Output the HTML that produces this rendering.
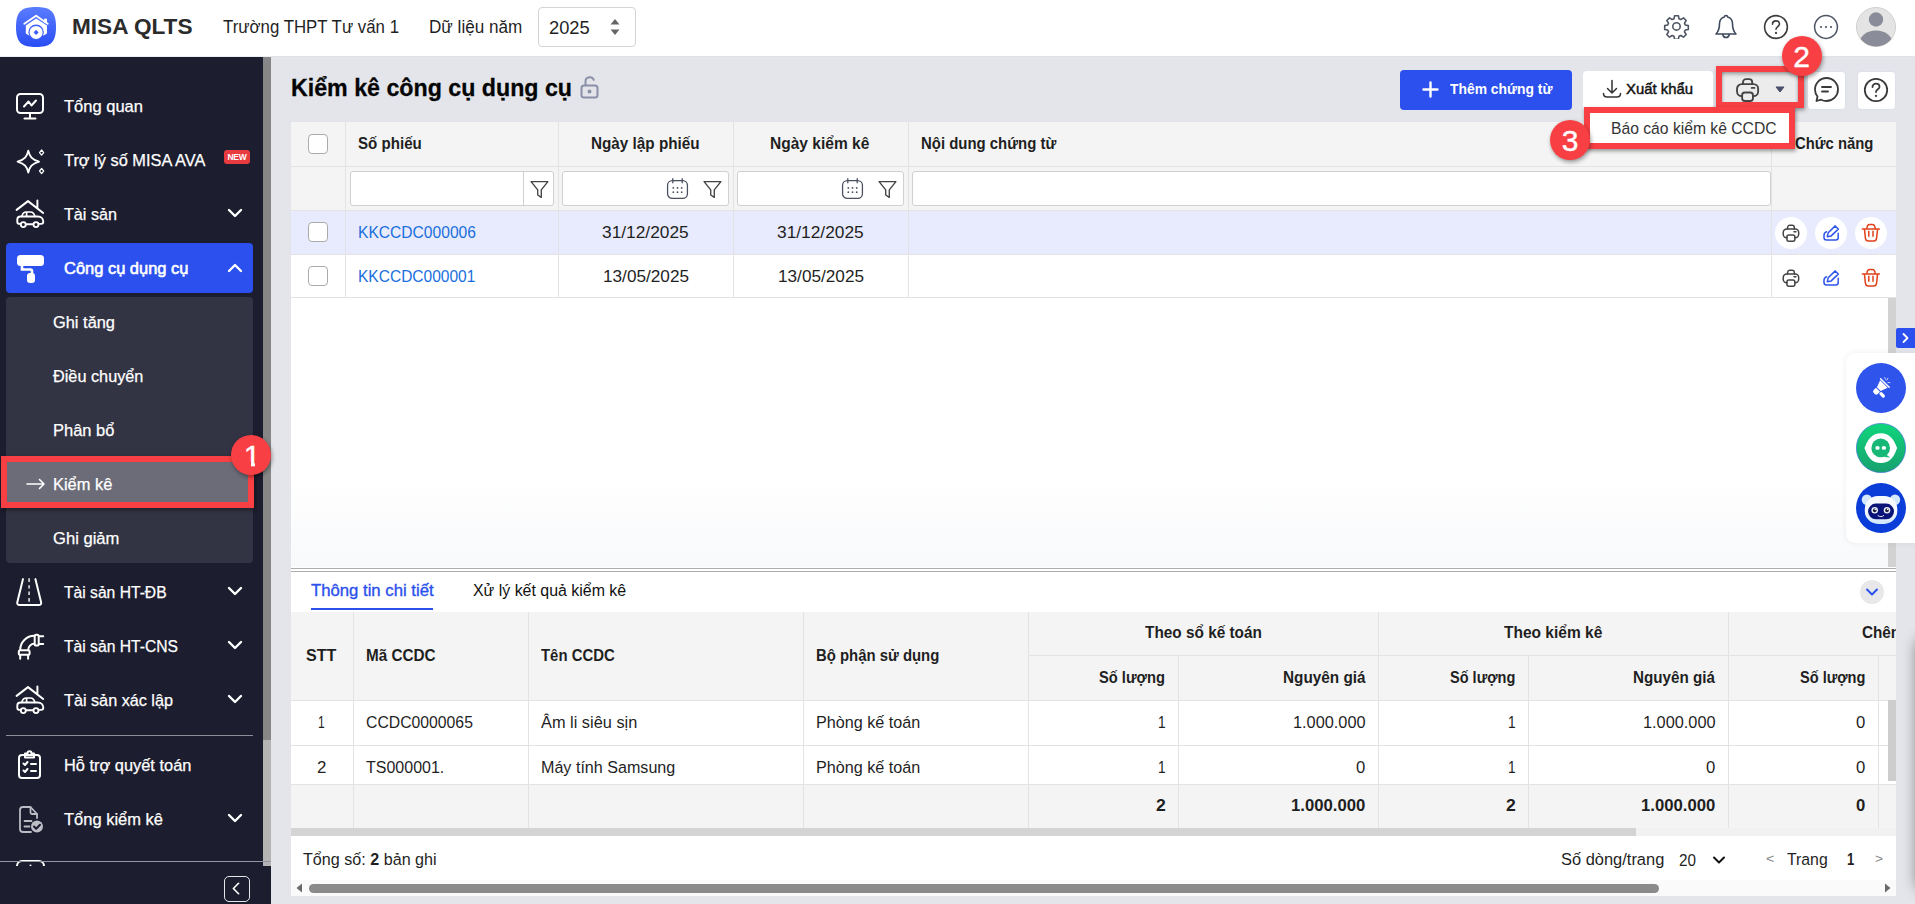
<!DOCTYPE html>
<html lang="vi">
<head>
<meta charset="utf-8">
<title>MISA QLTS - Kiểm kê công cụ dụng cụ</title>
<style>
*{box-sizing:border-box;margin:0;padding:0}
html,body{width:1915px;height:904px;overflow:hidden;background:#e4e5ea;font-family:"Liberation Sans",sans-serif;color:#1f1f1f}
.abs{position:absolute}
svg{display:block}
#hdr{position:absolute;left:0;top:0;width:1915px;height:56px;background:#fff;border-bottom:0}
#hdr .t{position:absolute;white-space:nowrap;line-height:20px}
#side{position:absolute;left:0;top:57px;width:271px;height:847px;background:#1c1d2e;overflow:hidden}
.mi{position:absolute;left:6px;width:247px;height:50px;border-radius:4px;color:#fff;font-size:16.800px}
.mi .lb{position:absolute;left:57.500px;top:17.200px;-webkit-text-stroke:.25px #fff;line-height:20px;white-space:nowrap}
.mi .ic{position:absolute;left:9px;top:11px;width:30px;height:30px}
.mi .ch{position:absolute;left:220px;top:18px}
.sm{position:absolute;left:0;width:247px;height:46px;color:#fff;font-size:16.800px}
.sm .lb{position:absolute;left:47.500px;top:14.200px;-webkit-text-stroke:.25px #fff;line-height:20px;white-space:nowrap}
#main{position:absolute;left:271px;top:57px;border-top:0;width:1644px;height:847px;background:#e4e5ea}
.btn{position:absolute;top:70px;height:39px;border-radius:4px;background:#fff}
.th{position:absolute;font-weight:bold;font-size:16.800px;line-height:20px;white-space:nowrap;color:#1f1f1f}
.td.b{font-weight:bold}
.td{position:absolute;font-size:16.800px;line-height:20px;white-space:nowrap;color:#1f1f1f}
.vl{position:absolute;width:1px;background:#e3e3e3}
.hl{position:absolute;height:1px;background:#e3e3e3}
.cb{position:absolute;width:20px;height:20px;border:1px solid #ababab;border-radius:4px;background:#fff}
.fi{position:absolute;top:171px;height:35px;border:1px solid #d0d0d0;border-radius:3px;background:#fff}
.red{position:absolute;border:6px solid #f84044;box-shadow:1px 2px 4px rgba(0,0,0,.4)}
.num i{position:absolute;background:#f84044;height:4.600px;top:27.200px}
.num{position:absolute;width:40px;height:40px;border-radius:50%;background:#f84044;color:#fff;font-size:30px;line-height:41px;text-align:center;-webkit-text-stroke:.4px #fff;box-shadow:1px 2px 4px rgba(0,0,0,.4)}
</style>
</head>
<body>
<!-- HEADER -->
<div id="hdr">
  <div class="abs" id="logo" style="left:16px;top:7px;width:40px;height:40px">
    <svg width="40" height="40" viewBox="0 0 40 40"><defs><linearGradient id="lg" x1="0" y1="0" x2="0" y2="1"><stop offset="0" stop-color="#5a7cff"/><stop offset="1" stop-color="#2a4df5"/></linearGradient></defs>
    <path d="M20 0C33 0 40 3 40 20C40 37 33 40 20 40C7 40 0 37 0 20C0 3 7 0 20 0Z" fill="url(#lg)"/>
    <path d="M8.300 16.800L20.100 8.700L31.700 16.800" fill="none" stroke="#fff" stroke-width="2" stroke-linecap="round" stroke-linejoin="round"/>
    <rect x="28.100" y="11.700" width="2.900" height="4.300" fill="#fff"/>
    <path d="M9.800 18.600L20.100 11.500L31 18.600V26.500L27.500 28.500H13L9.800 26.500z" fill="#fff"/>
    <circle cx="20.100" cy="25.300" r="7.700" fill="#3c5ffa"/>
    <circle cx="20.100" cy="25.400" r="6.500" fill="#fff"/>
    <path d="M20.100 22.800l2.500 2.600-2.500 2.600-2.500-2.600z" fill="#3c5ffa"/></svg>
  </div>
  <div class="t" style="left:71.500px;top:15.400px;font-size:22.300px;font-weight:bold;color:#2b2b2b;line-height:24px;left:71.5px;transform-origin:0 50%;transform:scaleX(1.0133)">MISA QLTS</div>
  <div class="t" style="left:222.500px;top:17.200px;font-size:17.500px;left:222.5px;transform-origin:0 50%;transform:scaleX(0.9613)">Trường THPT Tư vấn 1</div>
  <div class="t" style="left:430px;top:17.200px;font-size:17.500px;left:429.3px;transform-origin:0 50%;transform:scaleX(0.9782)">Dữ liệu năm</div>
  <div class="abs" style="left:538px;top:7px;width:98px;height:40px;border:1px solid #d4d4d4;border-radius:4px"></div>
  <div class="t" style="left:549px;top:18px;font-size:17.800px;left:548.5px;transform-origin:0 50%;transform:scaleX(1.0288)">2025</div>
  <svg class="abs" style="left:608px;top:16px" width="14" height="22" viewBox="0 0 14 22"><path d="M2.5 8.5L7 3l4.5 5.5z" fill="#666"/><path d="M2.5 13.5L7 19l4.5-5.5z" fill="#666"/></svg>

  <svg class="abs" style="left:1662.500px;top:12px" width="27" height="27" viewBox="0 0 24 24" fill="none" stroke="#4d5563" stroke-width="1.400" stroke-linejoin="round"><path d="M10.300 2.500h3.400l.5 2.700 1.700.7 2.300-1.500 2.400 2.400-1.500 2.300.7 1.700 2.700.5v3.400l-2.700.5-.7 1.700 1.500 2.300-2.400 2.400-2.300-1.500-1.700.7-.5 2.700h-3.400l-.5-2.700-1.700-.7-2.300 1.500-2.400-2.400 1.500-2.300-.7-1.700-2.700-.5v-3.400l2.700-.5.700-1.700-1.500-2.300 2.400-2.400 2.300 1.500 1.700-.7z" transform="translate(0 0.800)"/><circle cx="12" cy="12.800" r="3.300"/></svg>
  <svg class="abs" style="left:1713px;top:13px" width="26" height="28" viewBox="0 0 26 28" fill="none" stroke="#3f4a5c" stroke-width="1.600" stroke-linecap="round" stroke-linejoin="round"><path d="M13 2.500c-.9 0-1.600.7-1.600 1.500-3 .8-4.900 3.500-4.900 6.800 0 5.500-1.500 8.200-3.500 10.200h20c-2-2-3.500-4.700-3.500-10.200 0-3.300-1.900-6-4.900-6.800 0-.8-.7-1.500-1.600-1.500z"/><path d="M9.800 21.500c.3 1.800 1.600 3 3.200 3s2.900-1.200 3.200-3"/></svg>
  <svg class="abs" style="left:1763px;top:14px" width="26" height="26" viewBox="0 0 26 26" fill="none" stroke="#3c3c3c" stroke-width="1.600" stroke-linecap="round" stroke-linejoin="round"><circle cx="13" cy="13" r="11.400"/><path d="M9.500 10.200c0-2 1.500-3.300 3.500-3.300s3.500 1.300 3.500 3.200c0 2.300-3.500 2.600-3.500 5.100"/><path d="M13 18.900v.2" stroke-width="2.200"/></svg>
  <svg class="abs" style="left:1813px;top:14px" width="26" height="26" viewBox="0 0 26 26" fill="none" stroke="#4d5563" stroke-width="1.500" stroke-linecap="round"><circle cx="13" cy="13" r="11.400"/><path d="M8 13h.01M13 13h.01M18 13h.01" stroke-width="2.200"/></svg>
  <svg class="abs" style="left:1856px;top:7px" width="40" height="40" viewBox="0 0 40 40"><defs><clipPath id="avc"><circle cx="20" cy="20" r="19.500"/></clipPath></defs><circle cx="20" cy="20" r="19.500" fill="#e4e4e4" stroke="#d0d0d0" stroke-width="1"/><g clip-path="url(#avc)" fill="#8a8c99"><circle cx="20" cy="12.500" r="7.200"/><ellipse cx="20" cy="36" rx="16.500" ry="12.500"/></g></svg>
</div>

<div class="abs" style="left:0;top:56px;width:271px;height:1px;background:#eeeef2"></div><div class="abs" style="left:271px;top:56px;width:1644px;height:1px;background:#e0e1e6"></div>
<!-- SIDEBAR -->
<div id="side">
  <!-- scrollbar -->
  <div class="abs" style="left:263px;top:0;width:8px;height:809px;background:#b4b4b4"></div>
  <div class="abs" style="left:263px;top:0;width:8px;height:683px;background:#878787"></div>

  <div class="mi" style="top:23px"><svg class="ic" viewBox="0 0 30 30" fill="none" stroke="#fff" stroke-width="2" stroke-linecap="round" stroke-linejoin="round"><rect x="2" y="3" width="26" height="19" rx="3.5"/><path d="M15 22v5M9.5 27.5h11"/><path d="M9 15.5l4.5-5 3 4 4.5-5"/></svg><span class="lb" style="left:57.5px;transform-origin:0 50%;transform:scaleX(0.9844)">Tổng quan</span></div>

  <div class="mi" style="top:77px"><svg class="ic" viewBox="0 0 30 30" fill="none" stroke="#fff" stroke-width="1.9" stroke-linejoin="round"><path d="M13.300 5.600c1.300 6.200 3.600 8.800 10.700 11c-7.100 2.200-9.400 4.800-10.700 11c-1.300-6.200-3.600-8.800-10.700-11c7.100-2.200 9.400-4.800 10.700-11z"/><path d="M26.600 5l2.100 2.600-2.100 2.600-2.100-2.600zM26.600 23.400l2.100 2.600-2.100 2.600-2.100-2.600z" stroke-width="1.200"/></svg><span class="lb" style="left:57.5px;transform-origin:0 50%;transform:scaleX(0.9753)">Trợ lý số MISA AVA</span><span class="abs" style="left:218px;top:16px;width:26px;height:14px;border-radius:3px;background:#e83b3f;color:#fff;font-size:8.5px;font-weight:bold;line-height:14px;text-align:center;letter-spacing:-.2px">NEW</span></div>

  <div class="mi" style="top:131px"><svg class="ic" viewBox="0 0 30 30" fill="none" stroke="#fff" stroke-width="2" stroke-linecap="round" stroke-linejoin="round"><path d="M1.600 10.900L13 2.100L28.200 14M22.400 1.600v7.300"/><path d="M5.300 24.900H4.500c-1.300 0-2.200-.9-2.200-2.200v-2.100c0-1.800 1.400-3.100 3.200-3.100h17.300c3.100 0 5.500 2.300 5.500 5.300 0 1.200-.9 2.100-2 2.100h-2M11.400 25.300h6.500" stroke-width="1.900"/><path d="M6.900 17.300c.5-2.700 2-4.300 4.500-4.300h4c2.500 0 3.800 1.600 4.400 4.300M11.600 13.200v4" stroke-width="1.700"/><circle cx="8.300" cy="25.600" r="2.500" stroke-width="1.900"/><circle cx="21" cy="25.600" r="2.500" stroke-width="1.900"/></svg><span class="lb" style="left:57.5px;transform-origin:0 50%;transform:scaleX(0.9631)">Tài sản</span><svg class="ch" width="18" height="14" viewBox="0 0 18 14" fill="none" stroke="#fff" stroke-width="2.4" stroke-linecap="round" stroke-linejoin="round"><path d="M3 4l6 6 6-6"/></svg></div>

  <div class="mi" style="top:186px;background:#2b50ed;-webkit-text-stroke:.55px #fff"><svg class="ic" viewBox="0 0 30 30" fill="#fff"><rect x="2" y="1" width="27" height="11" rx="3.500"/><path d="M7 12v3.500h8.500c.8 0 1.500.7 1.500 1.500v4" fill="none" stroke="#fff" stroke-width="2.6"/><rect x="12" y="19" width="8" height="10" rx="3"/></svg><span class="lb" style="-webkit-text-stroke:.6px #fff;top:16.200px;left:57.5px;transform-origin:0 50%;transform:scaleX(0.9804)">Công cụ dụng cụ</span><svg class="ch" width="18" height="14" viewBox="0 0 18 14" fill="none" stroke="#fff" stroke-width="2.4" stroke-linecap="round" stroke-linejoin="round"><path d="M3 10l6-6 6 6"/></svg></div>

  <div class="abs" style="left:6px;top:240px;width:247px;height:266px;border-radius:4px;background:#323343">
    <div class="sm" style="top:2px"><span class="lb" style="left:47.1px;transform-origin:0 50%;transform:scaleX(0.9771)">Ghi tăng</span></div>
    <div class="sm" style="top:56px"><span class="lb" style="left:47.1px;transform-origin:0 50%;transform:scaleX(0.9689)">Điều chuyển</span></div>
    <div class="sm" style="top:110px"><span class="lb" style="left:47.1px;transform-origin:0 50%;transform:scaleX(0.9819)">Phân bổ</span></div>
    <div class="sm" style="top:164px;background:#6b6c78"><svg class="abs" style="left:20px;top:16px" width="20" height="14" viewBox="0 0 20 14" fill="none" stroke="#fff" stroke-width="1.6" stroke-linecap="round" stroke-linejoin="round"><path d="M1 7h17M13.500 2.500L18 7l-4.500 4.500"/></svg><span class="lb" style="left:47.1px;transform-origin:0 50%;transform:scaleX(0.9798)">Kiểm kê</span></div>
    <div class="sm" style="top:218px"><span class="lb" style="left:47.1px;transform-origin:0 50%;transform:scaleX(0.9887)">Ghi giảm</span></div>
  </div>

  <div class="mi" style="top:509px"><svg class="ic" viewBox="0 0 30 30" fill="none" stroke="#fff" stroke-width="2" stroke-linecap="round" stroke-linejoin="round"><path d="M8 2.100L2.300 25.200c-.4 1.600.5 2.900 2.200 2.900h19.400c1.700 0 2.600-1.300 2.200-2.900L20.400 2.100"/><path d="M14.100 1.300v3.600M14.100 8.200v3.300M14.100 14.600v3.300M14.100 20.900v3.900" stroke-width="1.600" stroke-linecap="butt" opacity=".85"/></svg><span class="lb" style="left:57.5px;transform-origin:0 50%;transform:scaleX(0.9323)">Tài sản HT-ĐB</span><svg class="ch" width="18" height="14" viewBox="0 0 18 14" fill="none" stroke="#fff" stroke-width="2.4" stroke-linecap="round" stroke-linejoin="round"><path d="M3 4l6 6 6-6"/></svg></div>

  <div class="mi" style="top:563px"><svg class="ic" viewBox="0 0 30 30" fill="none" stroke="#fff" stroke-width="2" stroke-linecap="round" stroke-linejoin="round"><path d="M5.200 18.900A14.100 14.100 0 0 1 19.300 4.800M13.200 18.900A6.100 6.100 0 0 1 19.300 12.800"/><rect x="19.700" y="3.700" width="4" height="10.800" rx="1.600"/><path d="M23.800 5.300h4.400M23.800 13h4.400"/><rect x="3.800" y="19.300" width="10.800" height="4.500" rx="1.600"/><path d="M5.200 24v3.700M13.100 24v3.700"/></svg><span class="lb" style="left:57.5px;transform-origin:0 50%;transform:scaleX(0.9332)">Tài sản HT-CNS</span><svg class="ch" width="18" height="14" viewBox="0 0 18 14" fill="none" stroke="#fff" stroke-width="2.4" stroke-linecap="round" stroke-linejoin="round"><path d="M3 4l6 6 6-6"/></svg></div>

  <div class="mi" style="top:617px"><svg class="ic" viewBox="0 0 30 30" fill="none" stroke="#fff" stroke-width="2" stroke-linecap="round" stroke-linejoin="round"><path d="M1.600 10.900L13 2.100L28.200 14M22.400 1.600v7.300"/><path d="M5.300 24.900H4.500c-1.300 0-2.200-.9-2.200-2.200v-2.100c0-1.800 1.400-3.100 3.200-3.100h17.300c3.100 0 5.500 2.300 5.500 5.300 0 1.200-.9 2.100-2 2.100h-2M11.400 25.300h6.500" stroke-width="1.900"/><path d="M6.900 17.300c.5-2.700 2-4.300 4.500-4.300h4c2.500 0 3.800 1.600 4.400 4.300M11.600 13.200v4" stroke-width="1.700"/><circle cx="8.300" cy="25.600" r="2.500" stroke-width="1.900"/><circle cx="21" cy="25.600" r="2.500" stroke-width="1.900"/></svg><span class="lb" style="left:57.5px;transform-origin:0 50%;transform:scaleX(0.9657)">Tài sản xác lập</span><svg class="ch" width="18" height="14" viewBox="0 0 18 14" fill="none" stroke="#fff" stroke-width="2.4" stroke-linecap="round" stroke-linejoin="round"><path d="M3 4l6 6 6-6"/></svg></div>

  <div class="abs" style="left:6px;top:678px;width:247px;height:1px;background:#8d8e97"></div>

  <div class="mi" style="top:682px"><svg class="ic" viewBox="0 0 30 30" fill="none" stroke="#fff" stroke-width="2" stroke-linecap="round" stroke-linejoin="round"><rect x="4" y="5" width="21" height="23" rx="3"/><path d="M10 5V3.500h2.500c0-1.500 1-2.200 2-2.200s2 .7 2 2.200H19V5v2.500h-9z"/><path d="M8.500 13.500l1.500 1.500 2.500-3M8.500 20.500l1.500 1.500 2.500-3M16 14h5M16 21h5"/></svg><span class="lb" style="left:57.5px;transform-origin:0 50%;transform:scaleX(0.9768)">Hỗ trợ quyết toán</span></div>

  <div class="mi" style="top:736px"><svg class="ic" viewBox="0 0 30 30" fill="none" stroke="#babbc4" stroke-width="1.800" stroke-linecap="round" stroke-linejoin="round"><path d="M22 14V10l-6.500-7H8c-1.700 0-3 1.300-3 3v19c0 1.700 1.300 3 3 3h8"/><path d="M15.500 3v5.500c0 .8.700 1.500 1.500 1.500H22"/><path d="M9.500 17h7M9.500 22.500h5"/><circle cx="22" cy="22.500" r="6" fill="#bdbdc6" stroke="none"/><path d="M19 22.500l2.200 2.200 3.800-4" stroke="#1c1d2e" stroke-width="2"/></svg><span class="lb" style="left:57.5px;transform-origin:0 50%;transform:scaleX(0.9828)">Tổng kiểm kê</span><svg class="ch" width="18" height="14" viewBox="0 0 18 14" fill="none" stroke="#fff" stroke-width="2.4" stroke-linecap="round" stroke-linejoin="round"><path d="M3 4l6 6 6-6"/></svg></div>

  <div class="mi" style="top:790px"><svg class="ic" viewBox="0 0 30 30" fill="none" stroke="#fff" stroke-width="2" stroke-linecap="round" stroke-linejoin="round"><rect x="2" y="3" width="27" height="19" rx="5"/><path d="M15.500 7.500v.01"/></svg></div>

  <!-- bottom bar -->
  <div class="abs" style="left:0;top:809px;width:271px;height:40px;background:#1c1d2e"></div><div class="abs" style="left:0;top:804px;width:271px;height:1px;background:#9495a0"></div>
  <div class="abs" style="left:224px;top:819px;width:26px;height:26px;border:1.500px solid #e6e6ea;border-radius:5px"><svg width="23" height="23" viewBox="0 0 22 22" fill="none" stroke="#fff" stroke-width="1.600" stroke-linecap="round" stroke-linejoin="round"><path d="M13 6l-5 5 5 5"/></svg></div>
</div>

<!-- MAIN -->
<div id="main"></div>
<div id="mc">
  <div class="abs" style="left:291px;top:73.500px;font-size:24.300px;font-weight:bold;line-height:28px;white-space:nowrap;color:#050505;-webkit-text-stroke:.3px #050505;left:291.1px;transform-origin:0 50%;transform:scaleX(0.9548)">Kiểm kê công cụ dụng cụ</div>
  <svg class="abs" style="left:580px;top:75px" width="19" height="24" viewBox="0 0 19 24" fill="none" stroke="#8a90a8" stroke-width="2" stroke-linecap="round"><rect x="1.500" y="10.500" width="16" height="12" rx="2.500"/><path d="M5.500 10V6.500a4.300 4.300 0 0 1 8.300-1.600"/><circle cx="9.500" cy="16.500" r="1.300" fill="#8a90a8" stroke-width="1.400"/></svg>

  <div class="btn" style="left:1400px;width:172px;height:40px;background:#2b50ed;color:#fff;font-weight:bold;font-size:15.500px"><svg class="abs" style="left:21.500px;top:11px" width="17" height="17" viewBox="0 0 17 17" stroke="#fff" stroke-width="2.400" stroke-linecap="round"><path d="M8.500 1.500v14M1.500 8.500h14"/></svg><span class="abs" style="left:50px;top:8.500px;line-height:20px;white-space:nowrap;left:49.5px;transform-origin:0 50%;transform:scaleX(0.8945)">Thêm chứng từ</span></div>
  <div class="btn" style="left:1583px;top:71px;height:38px;width:130px;color:#111;font-weight:bold;font-size:15.500px"><svg class="abs" style="left:19px;top:8px" width="20" height="20" viewBox="0 0 20 20" fill="none" stroke="#333" stroke-width="1.500" stroke-linecap="round" stroke-linejoin="round"><path d="M10 1.500v12M5.500 9.500l4.500 4.500 4.500-4.500M1.500 14.500c0 2 1.500 3.500 3.500 3.500h10c2 0 3.500-1.500 3.500-3.500"/></svg><span class="abs" style="left:43px;top:7.500px;line-height:20px;white-space:nowrap;font-weight:normal;-webkit-text-stroke:.45px #111;left:42.5px;transform-origin:0 50%;transform:scaleX(0.9597)">Xuất khẩu</span></div>
  <div class="btn" style="left:1722px;top:71px;width:76px;height:31px;background:#ececec;border-radius:0;box-shadow:inset 0 5px 5px -3px rgba(0,0,0,.5),inset 3px 0 3px -2px rgba(90,100,130,.3),inset -3px 0 3px -2px rgba(90,100,130,.3)"><div class="abs" style="left:12px;top:5px"><svg width="28" height="28" viewBox="0 0 24 24" fill="none" stroke="#444" stroke-width="1.6" stroke-linecap="round" stroke-linejoin="round"><path d="M7.700 6.900V5.300a2.600 2.600 0 0 1 2.600-2.600h2.700a2.600 2.600 0 0 1 2.600 2.600v1.600"/><path d="M7 17.300H6.600a4 4 0 0 1-4-4v-2.300a4 4 0 0 1 4-4h10.100a4 4 0 0 1 4 4v2.300a4 4 0 0 1-4 4h-.5"/><rect x="6.950" y="14.100" width="9.300" height="7.300" rx="2.300"/><path d="M15.200 10.200h2.300"/></svg></div><svg class="abs" style="left:52.500px;top:15px" width="10" height="7" viewBox="0 0 10 7"><path d="M1 1h8L5 6z" fill="#4a4f6a" stroke="#4a4f6a" stroke-width="1" stroke-linejoin="round"/></svg></div>
  <div class="btn" style="left:1806.500px;top:70.500px;width:39px;height:39px;border:1px solid #dde0e8"><svg class="abs" style="left:5px;top:4px" width="27" height="27" viewBox="0 0 27 27" fill="none" stroke="#3a3a3a" stroke-width="1.800" stroke-linecap="round" stroke-linejoin="round"><path d="M4.500 20.500C2.800 18.600 2 16.200 2 13.500 2 7.100 7.100 2 13.500 2S25 7.100 25 13.500 19.900 25 13.500 25c-2 0-3.800-.5-5.400-1.300L3.500 25z"/><path d="M9 11h9M9 15.500h6"/></svg></div>
  <div class="btn" style="left:1856.500px;top:70.500px;width:39px;height:39px;border:1px solid #dde0e8"><svg class="abs" style="left:5px;top:5px" width="26" height="26" viewBox="0 0 26 26" fill="none" stroke="#3a3a3a" stroke-width="1.800" stroke-linecap="round" stroke-linejoin="round"><circle cx="13" cy="13" r="11.200"/><path d="M9.500 10c0-2 1.500-3.300 3.500-3.300s3.500 1.300 3.500 3.200c0 2.300-3.500 2.600-3.500 5.100"/><path d="M13 18.800v.2" stroke-width="2.200"/></svg></div>

  <!-- master grid -->
  <div class="abs" style="left:291px;top:122px;width:1605px;height:446px;background:#fff"></div>
  <div class="abs" style="left:291px;top:122px;width:1605px;height:89px;background:#f4f4f4"></div>
  <div class="abs" style="left:291px;top:211px;width:1605px;height:44px;background:#e8ebfd"></div>
  <div class="hl" style="left:291px;top:166px;width:1605px"></div>
  <div class="hl" style="left:291px;top:210px;width:1605px"></div>
  <div class="hl" style="left:291px;top:254px;width:1605px"></div>
  <div class="hl" style="left:291px;top:297px;width:1605px"></div>
  <div class="vl" style="left:345px;top:122px;height:176px"></div>
  <div class="vl" style="left:558px;top:122px;height:176px"></div>
  <div class="vl" style="left:733px;top:122px;height:176px"></div>
  <div class="vl" style="left:908px;top:122px;height:176px"></div>
  <div class="vl" style="left:1771px;top:122px;height:176px"></div>
  <div class="abs" style="left:1888px;top:298px;width:8px;height:270px;background:#d2d2d2"></div>

  <div class="cb" style="left:308px;top:134px"></div>
  <div class="cb" style="left:308px;top:222px"></div>
  <div class="cb" style="left:308px;top:266px"></div>
  <div class="th" style="left:358px;top:133.500px;left:358.1px;transform-origin:0 50%;transform:scaleX(0.9004)">Số phiếu</div>
  <div class="th" style="left:558px;top:133.500px;left:591.1px;transform-origin:0 50%;transform:scaleX(0.9107)">Ngày lập phiếu</div>
  <div class="th" style="left:733px;top:133.500px;left:770.4px;transform-origin:0 50%;transform:scaleX(0.9256)">Ngày kiểm kê</div>
  <div class="th" style="left:921px;top:133.500px;left:921px;transform-origin:0 50%;transform:scaleX(0.8895)">Nội dung chứng từ</div>
  <div class="th" style="left:1795px;top:133.500px;left:1794.8px;transform-origin:0 50%;transform:scaleX(0.8848)">Chức năng</div>

  <div class="fi" style="left:350px;width:204px"><div class="abs" style="left:172px;top:0;width:1px;height:33px;background:#d0d0d0"></div><div class="abs" style="left:178px;top:7px"><svg width="21" height="21" viewBox="0 0 20 20" fill="none" stroke="#444" stroke-width="1.300" stroke-linejoin="round"><path d="M2 2.500h16l-6.300 7.800v7.200l-3.400-2.300v-4.900z"/></svg></div></div>
  <div class="fi" style="left:562px;width:167px"><div class="abs" style="left:103px;top:5px"><svg width="23" height="23" viewBox="0 0 22 22" fill="none" stroke="#4a4f5e" stroke-width="1.200" stroke-linecap="round"><rect x="1.500" y="3.500" width="19" height="17" rx="4.500"/><path d="M6.500 1.500v4M15.500 1.500v4"/><g stroke-width="1.700"><path d="M7 10.500h.01M11 10.500h.01M15 10.500h.01M7 14.500h.01M11 14.500h.01M15 14.500h.01"/></g></svg></div><div class="abs" style="left:139px;top:7px"><svg width="21" height="21" viewBox="0 0 20 20" fill="none" stroke="#444" stroke-width="1.300" stroke-linejoin="round"><path d="M2 2.500h16l-6.300 7.800v7.200l-3.400-2.300v-4.900z"/></svg></div></div>
  <div class="fi" style="left:737px;width:167px"><div class="abs" style="left:103px;top:5px"><svg width="23" height="23" viewBox="0 0 22 22" fill="none" stroke="#4a4f5e" stroke-width="1.200" stroke-linecap="round"><rect x="1.500" y="3.500" width="19" height="17" rx="4.500"/><path d="M6.500 1.500v4M15.500 1.500v4"/><g stroke-width="1.700"><path d="M7 10.500h.01M11 10.500h.01M15 10.500h.01M7 14.500h.01M11 14.500h.01M15 14.500h.01"/></g></svg></div><div class="abs" style="left:139px;top:7px"><svg width="21" height="21" viewBox="0 0 20 20" fill="none" stroke="#444" stroke-width="1.300" stroke-linejoin="round"><path d="M2 2.500h16l-6.300 7.800v7.200l-3.400-2.300v-4.900z"/></svg></div></div>
  <div class="fi" style="left:912px;width:859px"></div>

  <div class="td" style="left:358px;top:222.500px;color:#1a6fdc;left:358.3px;transform-origin:0 50%;transform:scaleX(0.9294)">KKCCDC000006</div>
  <div class="td" style="left:558px;top:222.500px;left:602.1px;transform-origin:0 50%;transform:scaleX(1.0321)">31/12/2025</div>
  <div class="td" style="left:733px;top:222.500px;left:777px;transform-origin:0 50%;transform:scaleX(1.0321)">31/12/2025</div>
  <div class="td" style="left:358px;top:266.500px;color:#1a6fdc;left:358.3px;transform-origin:0 50%;transform:scaleX(0.9254)">KKCCDC000001</div>
  <div class="td" style="left:558px;top:266.500px;left:602.8px;transform-origin:0 50%;transform:scaleX(1.0238)">13/05/2025</div>
  <div class="td" style="left:733px;top:266.500px;left:777.7px;transform-origin:0 50%;transform:scaleX(1.0238)">13/05/2025</div>
  <div class="abs" style="left:1775px;top:217px;width:32px;height:32px;border-radius:50%;background:#fff"></div>
  <div class="abs" style="left:1815px;top:217px;width:32px;height:32px;border-radius:50%;background:#fff"></div>
  <div class="abs" style="left:1855px;top:217px;width:32px;height:32px;border-radius:50%;background:#fff"></div>
  <svg class="abs" style="left:1781.100px;top:222.7px" width="20.500" height="20.500" viewBox="0 0 24 24" fill="none" stroke="#444" stroke-width="1.750" stroke-linecap="round" stroke-linejoin="round"><path d="M7.700 6.900V5.300a2.600 2.600 0 0 1 2.600-2.600h2.700a2.600 2.600 0 0 1 2.600 2.600v1.600"/><path d="M7 17.300H6.600a4 4 0 0 1-4-4v-2.300a4 4 0 0 1 4-4h10.100a4 4 0 0 1 4 4v2.300a4 4 0 0 1-4 4h-.5"/><rect x="6.950" y="14.100" width="9.300" height="7.300" rx="2.300"/><path d="M15.200 10.200h2.300"/></svg><svg class="abs" style="left:1821px;top:223.0px" width="20" height="20" viewBox="0 0 20 20" fill="none" stroke="#2f56ea" stroke-width="1.500" stroke-linecap="round" stroke-linejoin="round"><path d="M14.200 2.900L17.300 6.100L10.200 12.900L6.300 13.700L7.200 9.700z"/><path d="M5.500 8.700C3.700 9.400 3 10.600 3 12.200v2.300a2.500 2.500 0 0 0 2.500 2.500h9.200a2.500 2.500 0 0 0 2.500-2.500V10.200"/></svg><svg class="abs" style="left:1861px;top:222.0px" width="20" height="21" viewBox="0 0 20 21" fill="none" stroke="#e0421c" stroke-width="1.500" stroke-linecap="round" stroke-linejoin="round"><path d="M1.400 7H18.400"/><path d="M5.900 6.600c0-2.800 1.100-4.100 3-4.100h2.200c1.900 0 3 1.300 3 4.100"/><path d="M3.500 7.700l.9 8.400c.2 1.800 1.400 2.900 3 2.900h5.200c1.600 0 2.800-1.100 3-2.900l.9-8.400"/><path d="M7.800 9.300v5M12 9.300v5"/></svg>
  <svg class="abs" style="left:1781.100px;top:267.7px" width="20.500" height="20.500" viewBox="0 0 24 24" fill="none" stroke="#444" stroke-width="1.750" stroke-linecap="round" stroke-linejoin="round"><path d="M7.700 6.900V5.300a2.600 2.600 0 0 1 2.600-2.600h2.700a2.600 2.600 0 0 1 2.600 2.600v1.600"/><path d="M7 17.300H6.600a4 4 0 0 1-4-4v-2.300a4 4 0 0 1 4-4h10.100a4 4 0 0 1 4 4v2.300a4 4 0 0 1-4 4h-.5"/><rect x="6.950" y="14.100" width="9.300" height="7.300" rx="2.300"/><path d="M15.200 10.200h2.300"/></svg><svg class="abs" style="left:1821px;top:268.0px" width="20" height="20" viewBox="0 0 20 20" fill="none" stroke="#2f56ea" stroke-width="1.500" stroke-linecap="round" stroke-linejoin="round"><path d="M14.200 2.900L17.300 6.100L10.200 12.900L6.300 13.700L7.200 9.700z"/><path d="M5.500 8.700C3.700 9.400 3 10.600 3 12.200v2.300a2.500 2.500 0 0 0 2.500 2.500h9.200a2.500 2.500 0 0 0 2.500-2.500V10.200"/></svg><svg class="abs" style="left:1861px;top:267.0px" width="20" height="21" viewBox="0 0 20 21" fill="none" stroke="#e0421c" stroke-width="1.500" stroke-linecap="round" stroke-linejoin="round"><path d="M1.400 7H18.400"/><path d="M5.900 6.600c0-2.800 1.100-4.100 3-4.100h2.200c1.900 0 3 1.300 3 4.100"/><path d="M3.500 7.700l.9 8.400c.2 1.800 1.400 2.900 3 2.900h5.200c1.600 0 2.800-1.100 3-2.900l.9-8.400"/><path d="M7.800 9.300v5M12 9.300v5"/></svg>
  <!-- splitter + detail -->
  <div class="abs" style="left:291px;top:478px;width:1597px;height:89px;background:linear-gradient(#fff,#f8f9fb)"></div>
  <div class="abs" style="left:291px;top:567px;width:1605px;height:5px;background:#fff;border-bottom:1px solid #adadad"></div><div class="abs" style="left:291px;top:568px;width:1605px;height:1px;background:#adadad"></div>
  <div class="abs" style="left:291px;top:572px;width:1605px;height:40px;background:#fff"></div>
  <div class="abs" style="left:311px;top:580.700px;font-size:16.800px;line-height:20px;color:#2b50ed;white-space:nowrap;-webkit-text-stroke:.35px #2b50ed;left:310.8px;transform-origin:0 50%;transform:scaleX(0.9956)">Thông tin chi tiết</div>
  <div class="abs" style="left:311px;top:608px;width:122px;height:2px;background:#2b50ed"></div>
  <div class="abs" style="left:473px;top:580.700px;font-size:16.800px;line-height:20px;color:#111;white-space:nowrap;left:473.2px;transform-origin:0 50%;transform:scaleX(0.9492)">Xử lý kết quả kiểm kê</div>
  <div class="abs" style="left:1860px;top:579.500px;width:24px;height:24px;border-radius:50%;background:#e8e8eb"><svg class="abs" style="left:5px;top:7.500px" width="14" height="10" viewBox="0 0 14 10" fill="none" stroke="#2b50ed" stroke-width="2" stroke-linecap="round" stroke-linejoin="round"><path d="M2 2.500l5 5 5-5"/></svg></div>

  <div class="abs" style="left:291px;top:612px;width:1605px;height:88px;background:#f4f4f4"></div>
  <div class="abs" style="left:291px;top:700px;width:1605px;height:85px;background:#fff"></div>
  <div class="abs" style="left:291px;top:785px;width:1605px;height:43px;background:#f4f4f4"></div>
  <div class="hl" style="left:1028px;top:655px;width:868px"></div>
  <div class="hl" style="left:291px;top:700px;width:1605px"></div>
  <div class="hl" style="left:291px;top:745px;width:1605px"></div>
  <div class="hl" style="left:291px;top:784px;width:1605px"></div>
  <div class="vl" style="left:353px;top:612px;height:216px"></div><div class="vl" style="left:528px;top:612px;height:216px"></div><div class="vl" style="left:803px;top:612px;height:216px"></div><div class="vl" style="left:1028px;top:612px;height:216px"></div><div class="vl" style="left:1378px;top:612px;height:216px"></div><div class="vl" style="left:1728px;top:612px;height:216px"></div><div class="vl" style="left:1178px;top:656px;height:172px"></div><div class="vl" style="left:1528px;top:656px;height:172px"></div><div class="vl" style="left:1878px;top:656px;height:172px"></div>
  <div class="th" style="left:291px;top:645.500px;left:306.1px;transform-origin:0 50%;transform:scaleX(0.9589)">STT</div>
  <div class="th" style="left:366px;top:645.500px;left:365.8px;transform-origin:0 50%;transform:scaleX(0.9104)">Mã CCDC</div>
  <div class="th" style="left:541px;top:645.500px;left:541px;transform-origin:0 50%;transform:scaleX(0.8881)">Tên CCDC</div>
  <div class="th" style="left:816px;top:645.500px;left:815.5px;transform-origin:0 50%;transform:scaleX(0.8874)">Bộ phận sử dụng</div>
  <div class="th" style="left:1028px;top:623.200px;left:1145px;transform-origin:0 50%;transform:scaleX(0.9151)">Theo sổ kế toán</div>
  <div class="th" style="left:1378px;top:623.200px;left:1504px;transform-origin:0 50%;transform:scaleX(0.9245)">Theo kiểm kê</div>
  <div class="abs" style="left:1850px;top:620px;width:46px;height:30px;overflow:hidden"><div class="th" style="left:12px;top:3.200px;left:12.2px;transform-origin:0 50%;transform:scaleX(0.9099)">Chênh lệch</div></div>
  <div class="th" style="left:1015px;top:667.500px;left:1099.3px;transform-origin:0 50%;transform:scaleX(0.8758)">Số lượng</div>
  <div class="th" style="left:1215px;top:667.500px;left:1282.6px;transform-origin:0 50%;transform:scaleX(0.9132)">Nguyên giá</div>
  <div class="th" style="left:1365px;top:667.500px;left:1449.7px;transform-origin:0 50%;transform:scaleX(0.8665)">Số lượng</div>
  <div class="th" style="left:1565px;top:667.500px;left:1633px;transform-origin:0 50%;transform:scaleX(0.9054)">Nguyên giá</div>
  <div class="th" style="left:1715px;top:667.500px;left:1799.5px;transform-origin:0 50%;transform:scaleX(0.8678)">Số lượng</div>
  <div class="td" style="left:318.6px;top:712.8px;left:318.11px;transform-origin:0 50%;transform:scaleX(0.7171)">1</div>
<div class="td" style="left:366px;top:712.8px;left:365.8px;transform-origin:0 50%;transform:scaleX(0.9393)">CCDC0000065</div>
<div class="td" style="left:541px;top:712.8px;left:541px;transform-origin:0 50%;transform:scaleX(0.9741)">Âm li siêu sịn</div>
<div class="td" style="left:816px;top:712.8px;left:815.5px;transform-origin:0 50%;transform:scaleX(0.9636)">Phòng kế toán</div>
<div class="td" style="left:1158.2px;top:712.8px;left:1157.71px;transform-origin:0 50%;transform:scaleX(0.8134)">1</div>
<div class="td" style="left:1293.1px;top:712.8px;left:1292.61px;transform-origin:0 50%;transform:scaleX(0.9725)">1.000.000</div>
<div class="td" style="left:1508.2px;top:712.8px;left:1507.71px;transform-origin:0 50%;transform:scaleX(0.8134)">1</div>
<div class="td" style="left:1643.1px;top:712.8px;left:1642.61px;transform-origin:0 50%;transform:scaleX(0.9725)">1.000.000</div>
<div class="td" style="left:1856.5px;top:712.8px;left:1856px;transform-origin:0 50%;transform:scaleX(0.9953)">0</div>
<div class="td" style="left:317.6px;top:757.8px;left:317.11px;transform-origin:0 50%;transform:scaleX(1.006)">2</div>
<div class="td" style="left:366px;top:757.8px;left:365.8px;transform-origin:0 50%;transform:scaleX(0.9536)">TS000001.</div>
<div class="td" style="left:541px;top:757.8px;left:541px;transform-origin:0 50%;transform:scaleX(0.9598)">Máy tính Samsung</div>
<div class="td" style="left:816px;top:757.8px;left:815.5px;transform-origin:0 50%;transform:scaleX(0.9636)">Phòng kế toán</div>
<div class="td" style="left:1158.2px;top:757.8px;left:1157.71px;transform-origin:0 50%;transform:scaleX(0.8134)">1</div>
<div class="td" style="left:1356.4px;top:757.8px;left:1355.91px;transform-origin:0 50%;transform:scaleX(0.9953)">0</div>
<div class="td" style="left:1508.2px;top:757.8px;left:1507.71px;transform-origin:0 50%;transform:scaleX(0.8134)">1</div>
<div class="td" style="left:1706.4px;top:757.8px;left:1705.91px;transform-origin:0 50%;transform:scaleX(0.9953)">0</div>
<div class="td" style="left:1856.5px;top:757.8px;left:1856px;transform-origin:0 50%;transform:scaleX(0.9953)">0</div>
<div class="td b" style="left:1156.0px;top:795.5px;left:1155.5px;transform-origin:0 50%;transform:scaleX(1.0488)">2</div>
<div class="td b" style="left:1291.4px;top:795.5px;left:1290.91px;transform-origin:0 50%;transform:scaleX(0.9952)">1.000.000</div>
<div class="td b" style="left:1506.0px;top:795.5px;left:1505.5px;transform-origin:0 50%;transform:scaleX(1.0488)">2</div>
<div class="td b" style="left:1641.4px;top:795.5px;left:1640.91px;transform-origin:0 50%;transform:scaleX(0.9952)">1.000.000</div>
<div class="td b" style="left:1856.5px;top:795.5px;left:1856px;transform-origin:0 50%;transform:scaleX(0.9953)">0</div>

  <div class="abs" style="left:1888px;top:700px;width:8px;height:81px;background:#cdcdcd"></div>
  <!-- h scroll of grid -->
  <div class="abs" style="left:291px;top:828px;width:1605px;height:8px;background:#f1f1f1"></div>
  <div class="abs" style="left:291px;top:828px;width:1345px;height:8px;background:#d4d4d4"></div>
  <!-- footer -->
  <div class="abs" style="left:291px;top:836px;width:1605px;height:60px;background:#fff"></div>
  <div class="td" style="left:304px;top:850.200px;left:303.1px;transform-origin:0 50%;transform:scaleX(0.9609)">Tổng số: <b>2</b> bản ghi</div>
  <div class="td" style="left:1560px;top:850.200px;left:1560.7px;transform-origin:0 50%;transform:scaleX(0.9797)">Số dòng/trang</div>
  <div class="td" style="left:1678px;top:851px;left:1678.6px;transform-origin:0 50%;transform:scaleX(0.9105)">20</div>
  <svg class="abs" style="left:1712px;top:855px" width="14" height="10" viewBox="0 0 14 10" fill="none" stroke="#111" stroke-width="2" stroke-linecap="round" stroke-linejoin="round"><path d="M2 2.500l5 5 5-5"/></svg>
  <div class="td" style="left:1766px;top:849.300px;font-size:12.500px;color:#888;left:1765.5px;transform-origin:0 50%;transform:scaleX(1.1487)">&lt;</div>
  <div class="td" style="left:1787px;top:850.200px;left:1787.2px;transform-origin:0 50%;transform:scaleX(0.9417)">Trang</div>
  <div class="td" style="left:1847px;top:850.200px;font-weight:bold;left:1847.2px;transform-origin:0 50%;transform:scaleX(0.7813)">1</div>
  <div class="td" style="left:1875px;top:849.300px;font-size:12.500px;color:#888;left:1875.2px;transform-origin:0 50%;transform:scaleX(1.094)">&gt;</div>
  <div class="abs" style="left:291px;top:880px;width:1605px;height:16px;background:#fafafa"></div><svg class="abs" style="left:295px;top:882px" width="8" height="12" viewBox="0 0 8 12"><path d="M7 1.500v9L1.500 6z" fill="#6a6a6a"/></svg>
  <svg class="abs" style="left:1884px;top:882px" width="8" height="12" viewBox="0 0 8 12"><path d="M1 1.500v9L6.500 6z" fill="#6a6a6a"/></svg>
  <div class="abs" style="left:309px;top:884px;width:1350px;height:9px;border-radius:5px;background:#8a8a8a"></div>

  <!-- right floating panel -->
  <div class="abs" style="left:1896px;top:328px;width:19px;height:20px;background:#2b50ed;border-radius:2px 0 0 2px"><svg class="abs" style="left:5px;top:4px" width="9" height="12" viewBox="0 0 9 12" fill="none" stroke="#fff" stroke-width="1.800" stroke-linecap="round" stroke-linejoin="round"><path d="M2.500 2l4 4-4 4"/></svg></div>
  <div class="abs" style="left:1846px;top:353px;width:80px;height:190px;background:#fff;border-radius:9px;box-shadow:0 0 6px rgba(0,0,0,.07)"></div>
  <svg class="abs" style="left:1856px;top:363px" width="50" height="50" viewBox="0 0 50 50"><circle cx="25" cy="25" r="25" fill="#2f54eb"/><g transform="translate(25 25)" fill="#fff"><g transform="rotate(-45)"><rect x="5.600" y="-7.600" width="1.400" height="13.600" rx=".7"/><path d="M4.900-6.100V4.500L-2.300 1.900V-3.500z"/><path d="M-3.300-3.700V1.900h-3.300a2 2 0 0 1-2-2v-1.600a2 2 0 0 1 2-2z"/><rect x="-5.700" y="2.500" width="3.300" height="6.400" rx="1.500"/></g><g stroke="#fff" stroke-width=".9" stroke-linecap="round" opacity=".85"><path d="M3.800-10.400l.6 1.700M6.900-9.800l-1.100 2M8.900-5.400h-2"/></g></g></svg>
  <svg class="abs" style="left:1856px;top:423px" width="50" height="50" viewBox="0 0 50 50"><defs><linearGradient id="gg" x1="0" y1="0" x2="0" y2="1"><stop offset="0" stop-color="#10d67c"/><stop offset="1" stop-color="#17a06f"/></linearGradient></defs><circle cx="25" cy="25" r="24.600" fill="url(#gg)" stroke="#3b76d6" stroke-width=".7"/><circle cx="24.800" cy="25.200" r="14.900" fill="#fff"/><path d="M11 19.500L8.400 25l2.600 6zM38.600 19.500l2.600 5.500-2.600 6z" fill="#fff"/><circle cx="24.700" cy="24.900" r="9.300" fill="#17b877"/><path d="M30 31.500l4.300 3.100-6.300-.6z" fill="#17b877"/><ellipse cx="21.500" cy="24.900" rx="2.200" ry="1.900" fill="#fff"/><ellipse cx="27.900" cy="24.900" rx="2.200" ry="1.900" fill="#fff"/></svg>
  <svg class="abs" style="left:1856px;top:483px" width="50" height="50" viewBox="0 0 50 50"><defs><linearGradient id="hg" x1="0" y1="0" x2="0" y2="1"><stop offset=".55" stop-color="#f6faff"/><stop offset="1" stop-color="#cfe5fc"/></linearGradient></defs><circle cx="25" cy="25" r="25" fill="#0b3dd9"/><circle cx="10.900" cy="16.800" r="5.200" fill="#d3e8fc"/><circle cx="39" cy="16.800" r="5.200" fill="#d3e8fc"/><rect x="8.800" y="12.900" width="32.500" height="28" rx="13" fill="url(#hg)"/><rect x="12.100" y="20.600" width="25.900" height="15.600" rx="7.800" fill="#0a1478"/><circle cx="18.700" cy="27.200" r="3.300" fill="#e8edf7"/><circle cx="31" cy="27.200" r="3.300" fill="#e8edf7"/><circle cx="18.700" cy="27.400" r="1.800" fill="#1b1f3a"/><circle cx="31" cy="27.400" r="1.800" fill="#1b1f3a"/><circle cx="19.300" cy="26.500" r=".7" fill="#fff"/><circle cx="31.600" cy="26.500" r=".7" fill="#fff"/><path d="M22 32.600c1.500 1.500 4.200 1.500 5.700 0" stroke="#fff" stroke-width=".9" fill="none" stroke-linecap="round"/></svg>
  <!-- right edge shadow -->
  <div class="abs" style="left:1919px;top:640px;width:20px;height:248px;border-radius:8px;box-shadow:0 0 14px 3px rgba(0,0,0,.42)"></div>

  <!-- annotations -->
  <div class="red" style="left:1px;top:456px;width:253px;height:52px;border-width:6px"></div>
  <div class="num" style="left:231px;top:435px;padding-left:2px">1<i style="left:13px;width:6.500px"></i><i style="left:23.500px;width:5.500px"></i></div>
  <div class="red" style="left:1716px;top:65.500px;width:88px;height:42px;border-width:6px"></div>
  <div class="red" style="left:1584px;top:107px;width:211px;height:42px;border-width:6px;background:#fff"></div>
  <div class="abs" style="left:1611px;top:119.200px;font-size:16.800px;line-height:20px;color:#333;white-space:nowrap;left:1610.6px;transform-origin:0 50%;transform:scaleX(0.9345)">Báo cáo kiểm kê CCDC</div>
  <div class="num" style="left:1781.500px;top:36px">2</div>
  <div class="num" style="left:1550px;top:120px">3</div>

</div>

</body>
</html>
